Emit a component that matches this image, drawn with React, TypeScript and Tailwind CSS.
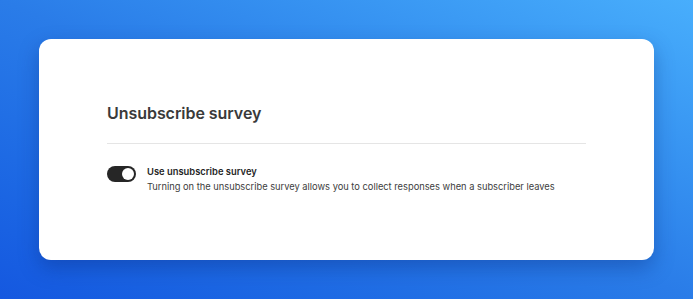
export default function App() {
  return (
    <div
      className="w-[693px] h-[299px] flex items-start justify-start bg-gradient-to-tr from-[#1558e0] via-[#2a7ce8] to-[#48aefc] pt-[39px] pl-[39px]"
      style={{ fontFamily: "Inter, 'Noto Sans', sans-serif" }}
    >
      {/* Card */}
      <div className="w-[615px] h-[221px] bg-white rounded-[12px] shadow-[0_8px_20px_rgba(10,40,120,0.35)] px-[68px] pt-[64px]">
        <h2 className="text-[16px] leading-[20px] font-semibold text-[#3a3a3a] tracking-[-0.05px]">
          Unsubscribe survey
        </h2>
        <div className="mt-[20px] h-px bg-[#e5e5e5]" />

        <div className="mt-[21px] flex items-start gap-[11px]">
          {/* Toggle */}
          <button className="mt-[1px] w-[29px] h-[16px] rounded-full bg-[#262626] flex items-center justify-end px-[2px]">
            <span className="w-[12px] h-[12px] rounded-full bg-white" />
          </button>
          <div>
            <div className="text-[9.4px] leading-[13px] font-semibold text-[#262626]">
              Use unsubscribe survey
            </div>
            <div className="mt-[3px] text-[9.3px] leading-[12px] text-[#404040]">
              Turning on the unsubscribe survey allows you to collect responses when a subscriber leaves
            </div>
          </div>
        </div>
      </div>
    </div>
  );
}
